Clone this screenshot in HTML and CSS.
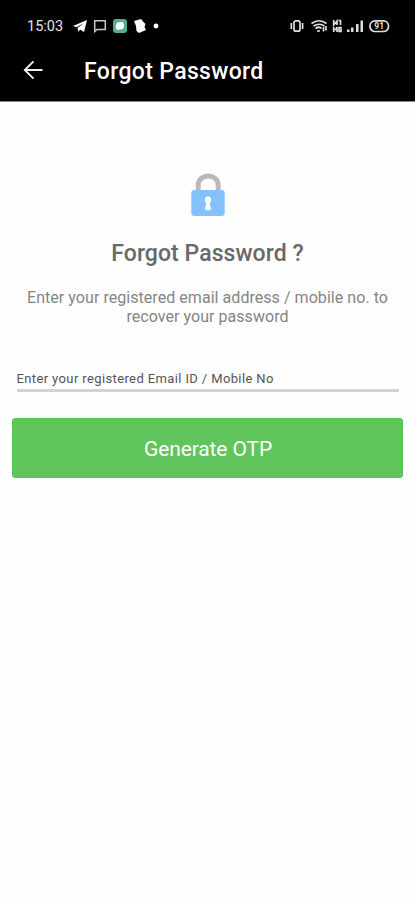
FILE: index.html
```html
<!DOCTYPE html>
<html lang="en">
<head>
<meta charset="utf-8">
<title>Forgot Password</title>
<link rel="stylesheet" href="styles.css">
</head>
<body>
<header class="top">
  <div class="status">
    <span class="clock">15:03</span>
    <svg class="notifications" width="88" height="16" viewBox="0 0 88 16">
      <path fill="#fff" d="M0 8 14 2 11 14 7 11.5 5.5 14 4.5 10 11 5 3.500 9.300Z"/>
      <path fill="none" stroke="#c8c8c8" stroke-width="1.500" d="M21.700 2.800H32.300V11.500H24L21.700 13.500Z"/>
      <rect x="40" y="1" width="14" height="14" rx="3" fill="#4fb08c"/>
      <path fill="#fff" d="M44 4.500 50 4Q52 8 50 11L44 12Q41.500 8.500 44 4.500Z"/>
      <path fill="#fff" d="M61 3 68 1 70.500 4 72.500 6 71.500 9 73 12 66 15 63.500 13 63 8Z"/>
      <circle cx="83" cy="8" r="2.400" fill="#fff"/>
    </svg>
    <svg class="system" width="100" height="16" viewBox="0 0 100 16">
      <g fill="none" stroke="#ddd" stroke-width="1.700">
        <rect x="4" y="2.800" width="6" height="10.400" rx="2"/>
        <path d="M1.300 5V11M12.600 5V11"/>
        <path d="M21.500 5.500Q29 0 36.500 5.500M23.500 8Q29 4.500 34.500 8M25.500 10.500Q29 8 31.500 10.500M27 13H30M33.500 9V13.500M36 8V12.500"/>
        <path d="M43.700 2V7L47 3V7M48.500 2.500H50.500V7M43.700 9V14M43.700 11.500H46L47 9V14M49 9.500H51V13.500H49Z"/>
        <rect x="80" y="2.800" width="18.500" height="10.700" rx="5"/>
      </g>
      <path fill="#ddd" d="M57 11.500H59.500V14H57ZM61 9.500H63.500V14H61ZM66 6H68.500V14H66ZM70.500 2.500H73V14H70.500Z"/>
      <text class="charge" x="84.300" y="11.200">91</text>
    </svg>
  </div>
  <div class="toolbar">
    <svg class="back" width="20" height="20" viewBox="0 0 20 20"><path fill="none" stroke="#f2f2f2" stroke-width="1.900" d="M19.500 10H2M10.500 1.300 1.800 10 10.500 18.700"/></svg>
    <h1>Forgot Password</h1>
  </div>
</header>
<main>
  <svg class="lock" width="36" height="46" viewBox="0 0 36 46">
    <path fill="none" stroke="#b9b9b9" stroke-width="5" d="M8.200 19V13.500C8.200 .8 28.200 .8 28.200 13.500V19"/>
    <rect x="1.300" y="18" width="33.400" height="26" rx="3" fill="#85c1fa"/>
    <path fill="#fff" d="M18 24.300A3.500 3.500 0 0 1 20 30.500Q19.500 32 20.800 35.500Q21.800 38.300 18 38.300Q14.200 38.300 15.200 35.500Q16.500 32 16 30.500A3.500 3.500 0 0 1 18 24.300Z"/>
  </svg>
  <h2>Forgot Password ?</h2>
  <p>Enter your registered email address / mobile no. to<br>recover your password</p>
  <div class="field">Enter your registered Email ID / Mobile No</div>
  <button type="button">Generate OTP</button>
</main>
</body>
</html>
```
FILE: styles.css
```css
* { box-sizing: border-box; }
body { margin: 0; background: #fefefe; font-family: Roboto, sans-serif; }
.top { height: 102px; background: #000; border-bottom: 1px solid #888; padding-top: 18px; }
.status { display: flex; align-items: center; height: 16px; padding: 0 24px 0 27px; }
.clock { padding-top: 2px; color: #e5e5e5; font-size: 14.5px; line-height: 16px; width: 46px; }
.system { margin-left: auto; margin-right: 1px; }
.charge { font-size: 8.5px; font-weight: 700; fill: #ddd; }
.toolbar { display: flex; align-items: center; height: 72px; padding-left: 23px; }
.back { margin-right: 41px; }
h1 { margin: 0; padding-top: 3px; color: #fff; font-size: 23px; font-weight: 500; line-height: 28px; letter-spacing: 0.34px; white-space: nowrap; }
main { display: flex; flex-direction: column; align-items: center; padding: 70px 12px 0; }
h2 { margin: 22px 0 0; color: #686868; font-size: 23px; font-weight: 500; line-height: 28px; letter-spacing: 0.06px; white-space: nowrap; }
p { margin: 20px 0 0; color: #858585; font-size: 16px; line-height: 19px; letter-spacing: 0.05px; text-align: center; white-space: nowrap; }
.field { width: 382px; height: 26px; margin-top: 40px; border-bottom: 3px solid #d2d2d2; color: #555; font-size: 13px; line-height: 26px; letter-spacing: 0.38px; white-space: nowrap; }
button { width: 391px; height: 60px; margin-top: 26px; padding: 2px 0 0 1px; border: 1px solid #55c352; border-radius: 3px; background: #60c55d; color: #fff; font-family: inherit; font-size: 21px; line-height: 28px; letter-spacing: -0.12px; }
```
